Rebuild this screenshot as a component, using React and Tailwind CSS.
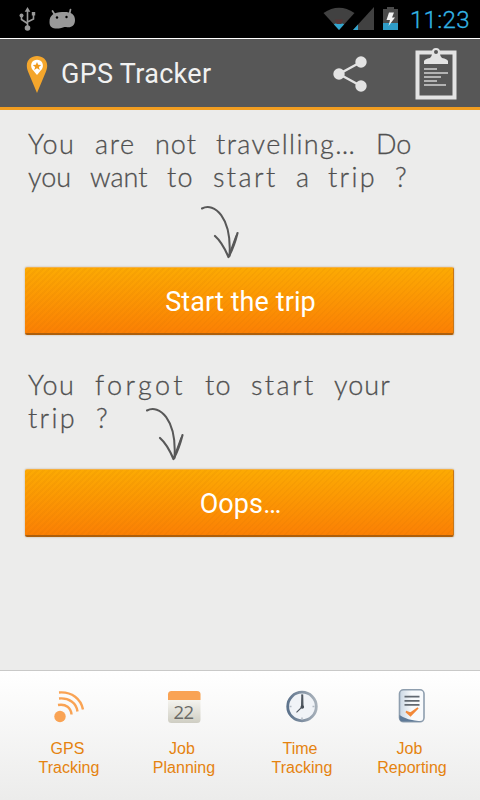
const hand = "font-['Lato','Noto_Sans',sans-serif] font-light text-[27px] leading-[34px] text-[#505050] [-webkit-text-stroke:0.3px_#505050]";

// every word sits in a slot of its own so that the note keeps its uneven rhythm
const travelNote = [
  [
    { text: "You", slot: "w-[67px]", tracking: "tracking-[1.4px]" },
    { text: "are", slot: "w-[60px]", tracking: "tracking-[1.6px]" },
    { text: "not", slot: "w-[61px]", tracking: "tracking-[1px]" },
    { text: "travelling…", slot: "w-[160px]", tracking: "tracking-[1.4px]" },
    { text: "Do", slot: "w-[40px]", tracking: "tracking-[0px]" },
  ],
  [
    { text: "you", slot: "w-[62px]", tracking: "tracking-[0px]" },
    { text: "want", slot: "w-[77px]", tracking: "tracking-[0px]" },
    { text: "to", slot: "w-[46px]", tracking: "tracking-[1.2px]" },
    { text: "start", slot: "w-[83px]", tracking: "tracking-[2.4px]" },
    { text: "a", slot: "w-[32px]", tracking: "tracking-[0px]" },
    { text: "trip", slot: "w-[67px]", tracking: "tracking-[2.3px]" },
    { text: "?", slot: "w-[20px]", tracking: "tracking-[0px]" },
  ],
];

const forgotNote = [
  [
    { text: "You", slot: "w-[67px]", tracking: "tracking-[1.4px]" },
    { text: "forgot", slot: "w-[110px]", tracking: "tracking-[3.4px]" },
    { text: "to", slot: "w-[46px]", tracking: "tracking-[1.2px]" },
    { text: "start", slot: "w-[83px]", tracking: "tracking-[2.4px]" },
    { text: "your", slot: "w-[60px]", tracking: "tracking-[1px]" },
  ],
  [
    { text: "trip", slot: "w-[68px]", tracking: "tracking-[2.3px]" },
    { text: "?", slot: "w-[20px]", tracking: "tracking-[0px]" },
  ],
];

function Note({ lines }) {
  return (
    <div className={hand}>
      {lines.map((line, i) => (
        <p key={i} className="flex h-[33px] whitespace-nowrap">
          {line.map((word) => (
            <span key={word.text} className={`${word.slot} ${word.tracking} shrink-0`}>
              {word.text}
            </span>
          ))}
        </p>
      ))}
    </div>
  );
}

function Arrow() {
  return (
    <svg width="40" height="56" viewBox="0 0 40 56" fill="none" stroke="#585858" strokeLinecap="round" strokeLinejoin="round">
      <path d="M2 3.5C14-3 32 12 29.5 51" strokeWidth="2" />
      <path d="M15 31Q22 37 28.5 52Q34 42 37.5 28" strokeWidth="2.2" />
      <path d="M28.5 52Q32 42 36 31L30.5 46Z" fill="#585858" strokeWidth="1.4" />
    </svg>
  );
}

function OrangeButton({ children }) {
  return (
    <button className="h-[68px] w-[429px] shrink-0 rounded-[2px] border-t border-r border-b-2 border-t-[#f5b042] border-r-[#c87718] border-b-[#ad5f0c] bg-[repeating-linear-gradient(135deg,rgba(190,100,0,0.08)_0px,rgba(190,100,0,0.08)_1.5px,transparent_1.5px,transparent_4.24px),linear-gradient(to_bottom,#fcaa03,#fb8004)] pt-[3px] pl-[3px] font-['Roboto','Noto_Sans',sans-serif] text-[27px] tracking-[0.1px] text-white shadow-[0_0_2px_rgba(120,80,20,0.4)]">
      {children}
    </button>
  );
}

function StatusBar() {
  return (
    <div className="flex h-[38px] items-center justify-between bg-black pr-[9px] pl-[19px]">
      <div className="flex items-center gap-[12px]">
        <svg width="18" height="26" viewBox="0 0 18 26" fill="none" stroke="#999" strokeWidth="1.6">
          <path d="M8.5 5V22M2.5 10V13.5L8.5 17.5M14.5 8.5V13L8.5 16" />
          <path d="M5.7 5.8L8.5 1L11.3 5.8Z" fill="#999" stroke="none" />
          <circle cx="8.5" cy="22" r="2.8" fill="#999" stroke="none" />
          <circle cx="2.5" cy="9.5" r="2" fill="#999" stroke="none" />
          <path d="M12.8 6H16.2V9.5H12.8Z" fill="#999" stroke="none" />
        </svg>
        <svg width="28" height="22" viewBox="0 0 28 22">
          <path d="M3.5 3L6 7M21.5 1.5L20.5 6" stroke="#999" strokeWidth="1.7" strokeLinecap="round" />
          <path d="M0.5 14C0.5 7 5 4.5 13 4S26 5.5 26 12C26 18 22 20 17 19C14 18.7 13 20.6 8 20.5C3 20.4 0.5 19 0.5 14Z" fill="#999" />
          <circle cx="8" cy="9.5" r="1.2" fill="#000" />
          <circle cx="17.5" cy="9" r="1.2" fill="#000" />
        </svg>
      </div>
      <div className="flex items-center">
        <svg width="76" height="26" viewBox="0 0 76 26">
          <path d="M0.5 7Q16-3.5 31.5 7L16 24Z" fill="#414141" />
          <path d="M10.8 18.2Q16 15.8 21.2 18.2L16 24Z" fill="#33a5ce" />
          <path d="M12 13.5H20L18.5 18H13.5Z" fill="#573636" />
          <path d="M30 24L51 1V24Z" fill="#414141" />
          <path d="M30 24L35 18.5V24Z" fill="#33a5ce" />
          <path d="M64 1H71V3H75V24H60V3H64Z" fill="#4a4a4a" />
          <path d="M60 17H75V24H60Z" fill="#2f9cc7" />
          <path d="M66 6.5H71L69 11.5H72L65.5 20L67 14H63.5Z" fill="#f2f2f2" />
        </svg>
        <span className="ml-[11px] w-[61px] pt-[2px] font-['Roboto',sans-serif] text-[24px] leading-[36px] font-light tracking-[0.3px] whitespace-nowrap text-[#33b5e5] [-webkit-text-stroke:0.3px_#33b5e5]">11:23</span>
      </div>
    </div>
  );
}

function Header() {
  return (
    <header className="flex h-[72px] items-center border-t border-b-3 border-t-white border-b-[#f19d20] bg-[#575757] pl-[26px]">
      <svg width="22" height="39" viewBox="0 0 22 39" className="mt-[2px]">
        <path d="M11 38L2.2 17C-2 7 4 1 11 1S24 7 19.8 17Z" fill="#f4a62c" />
        <path d="M11 20L6 14C3.5 9 6.5 4.7 11 4.7S18.5 9 16 14Z" fill="#fff" />
        <path d="M11 7L12.2 9.8L15.2 10L12.9 12L13.7 15L11 13.3L8.3 15L9.1 12L6.8 10L9.8 9.8Z" fill="#f09a1c" />
      </svg>
      <h1 className="ml-[13px] w-[272px] pt-[3px] font-['Roboto',sans-serif] text-[27px] tracking-[0.3px] text-[#f1f1f1]">GPS Tracker</h1>
      <svg width="35" height="36" viewBox="0 0 35 36" fill="#e3e3e3" stroke="#e3e3e3" className="mt-[2px]">
        <path d="M28 6L6 18L28 30" fill="none" strokeWidth="2.4" />
        <circle cx="6" cy="18" r="5.7" stroke="none" />
        <circle cx="28" cy="6" r="5.7" stroke="none" />
        <circle cx="28" cy="30" r="5.7" stroke="none" />
      </svg>
      <svg width="42" height="54" viewBox="0 0 42 54" className="mt-[2px] ml-[47px]">
        <path d="M2.5 5.5H39.5V50.5H2.5Z" fill="none" stroke="#e3e3e3" strokeWidth="4" />
        <path d="M9 17V14Q10 12 15 11Q17 9 17 7H25Q25 9 27 11Q32 12 33 14V17Z" fill="#e3e3e3" />
        <circle cx="21" cy="5" r="3" fill="#575757" stroke="#e3e3e3" strokeWidth="2" />
        <path d="M9 22H22M9 26H33M9 30H26M9 34H22M9 38H31" stroke="#d2d2d2" strokeWidth="1.7" />
      </svg>
    </header>
  );
}

function GpsIcon() {
  return (
    <svg width="34" height="34" viewBox="0 0 34 34" fill="none" stroke="#f9a354" strokeWidth="2.4">
      <circle cx="8" cy="26.5" r="5.7" fill="#f9a354" stroke="none" />
      <path d="M6 15C14 13.5 19 18 19.5 24.5M7 8.5C17 7.5 24.5 13 25.5 21.5M7 2.5C20 1.5 29 9 31 19.5" />
    </svg>
  );
}

function CalendarIcon() {
  return (
    <svg width="34" height="34" viewBox="0 0 34 34">
      <defs>
        <linearGradient id="page" x1="0" y1="0" x2="0" y2="1">
          <stop offset="0.3" stopColor="#f4f3ee" />
          <stop offset="1" stopColor="#cfcec3" />
        </linearGradient>
      </defs>
      <rect x="1" y="1" width="32.5" height="32" rx="3.5" fill="url(#page)" />
      <path d="M1 10V4.5Q1 1 4.5 1H30Q33.5 1 33.5 4.5V10Z" fill="#f9a354" />
      <text x="16.5" y="28.8" textAnchor="middle" fill="#6a6a67" className="font-['Open_Sans',sans-serif] text-[18.5px] tracking-[-0.6px]">22</text>
    </svg>
  );
}

function ClockIcon() {
  return (
    <svg width="34" height="34" viewBox="0 0 34 34">
      <defs>
        <linearGradient id="rim" x1="0" y1="0.5" x2="1" y2="0.4">
          <stop offset="0" stopColor="#5d738c" />
          <stop offset="1" stopColor="#a8b1ba" />
        </linearGradient>
      </defs>
      <circle cx="17" cy="16.5" r="14.3" fill="#f0f3f7" stroke="url(#rim)" strokeWidth="2.8" />
      <path d="M17 4V6M17 27.5V29.5M4.5 16.5H6.5M27.5 16.5H29.5" stroke="#b1bac4" strokeWidth="1.5" />
      <path d="M16.5 17L16.9 5H17.7L18 17M17 17L11.5 22.3" fill="#505861" stroke="#505861" strokeWidth="1.1" />
      <circle cx="17.3" cy="17" r="1.8" fill="#454d56" />
    </svg>
  );
}

function ReportIcon() {
  return (
    <svg width="28" height="36" viewBox="0 0 28 36" className="mb-[2px]">
      <defs>
        <linearGradient id="sheet" x1="0" y1="0.5" x2="1" y2="0.5">
          <stop offset="0" stopColor="#c9d6e3" />
          <stop offset="0.5" stopColor="#f8fafc" />
        </linearGradient>
      </defs>
      <rect x="1.5" y="1.8" width="24.5" height="32" rx="4" fill="url(#sheet)" stroke="#8e9eae" strokeWidth="1.6" />
      <path d="M1.5 27Q8 32 24 33.5H5Q1.5 33.5 1.5 30Z" fill="#5f7a98" />
      <path d="M6.5 8.7H21.5M6.5 12.8H21.5M6.5 16.9H21.5" stroke="#626971" strokeWidth="1.8" />
      <path d="M8 23.5L12.5 27.5L20 20L12.5 25.2Z" fill="#f2893a" stroke="#f2893a" strokeWidth="1.7" />
    </svg>
  );
}

const tabs = [
  { top: "GPS", bottom: "Tracking", icon: <GpsIcon />, place: "ml-[19px]", shift: "pr-[3px]" },
  { top: "Job", bottom: "Planning", icon: <CalendarIcon />, place: "ml-[15px]", shift: "pr-[4px]" },
  { top: "Time", bottom: "Tracking", icon: <ClockIcon />, place: "ml-[18px]", shift: "pr-[4px]" },
  { top: "Job", bottom: "Reporting", icon: <ReportIcon />, place: "ml-[10px]", shift: "pr-[5px]" },
];

export default function App() {
  return (
    <div className="flex h-[800px] w-[480px] flex-col overflow-hidden bg-[#ececeb]">
      <StatusBar />
      <Header />

      <main className="flex grow flex-col pl-[25px]">
        <div className="mt-[17px] ml-[3px] h-[68px]">
          <Note lines={travelNote} />
        </div>
        <div className="mt-[10px] ml-[175px] h-[56px]">
          <Arrow />
        </div>
        <div className="mt-[6px] flex">
          <OrangeButton>Start the trip</OrangeButton>
        </div>

        <div className="mt-[33px] ml-[3px] flex h-[101px]">
          <Note lines={forgotNote} />
        </div>
        <div className="-mt-[62px] ml-[120px] h-[56px]">
          <Arrow />
        </div>
        <div className="mt-[6px] flex">
          <OrangeButton>Oops…</OrangeButton>
        </div>
      </main>

      <nav className="flex h-[130px] border-t border-[#c9c9c8] bg-linear-to-b from-white to-[#ececeb] font-['Liberation_Sans',Arial,sans-serif] text-[16px] leading-[19px] text-[#e5830f]">
        {tabs.map((tab) => (
          <div key={tab.top + tab.bottom} className={`${tab.place} flex w-[100px] shrink-0 flex-col items-center pt-[19px]`}>
            <div className="flex h-[34px] items-center">{tab.icon}</div>
            <span className={`${tab.shift} mt-[15px]`}>{tab.top}</span>
            <span>{tab.bottom}</span>
          </div>
        ))}
      </nav>
    </div>
  );
}
